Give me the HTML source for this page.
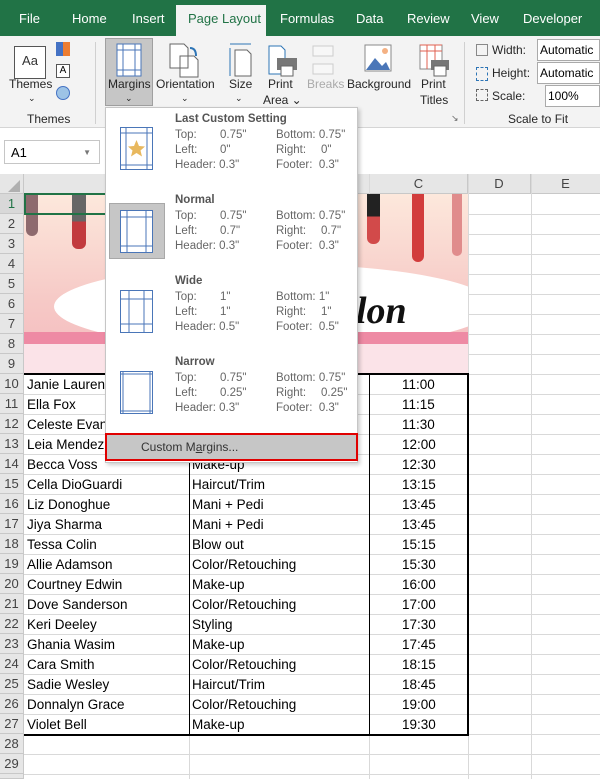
<!DOCTYPE html>
<html><head><meta charset="utf-8"><style>
*{margin:0;padding:0;box-sizing:border-box}
html,body{width:600px;height:779px;overflow:hidden}
body{background:#fff;font-family:"Liberation Sans",sans-serif;position:relative}
.a{position:absolute}
.tab{position:absolute;top:11px;color:#fff;font-size:13px}
.rb{position:absolute;font-size:12px;color:#262626;text-align:center}
.rh{position:absolute;left:0;width:24px;height:20px;background:#e6e6e6;border-bottom:1px solid #c8c8c8;border-right:1px solid #c8c8c8;font-size:13px;color:#444;text-align:center;line-height:20px}
.hl{position:absolute;left:24px;width:576px;height:1px;background:#d9d9d9}
.vl{position:absolute;top:174px;width:1px;height:605px;background:#d9d9d9}
.c{position:absolute;font-size:13.5px;color:#000;line-height:20px;white-space:nowrap}
.m{position:absolute;font-size:11.5px;color:#666;line-height:15px}
.mt{position:absolute;font-size:11.5px;color:#555;font-weight:bold}
</style></head><body>
<div class="a" style="left:0;top:0;width:600px;height:36px;background:#217346"></div>
<div class="a" style="left:176px;top:5px;width:90px;height:31px;background:#f3f3f3"></div>
<div class="tab" style="left:19px">File</div>
<div class="tab" style="left:72px">Home</div>
<div class="tab" style="left:132px">Insert</div>
<div class="tab" style="left:188px;color:#217346">Page Layout</div>
<div class="tab" style="left:280px">Formulas</div>
<div class="tab" style="left:356px">Data</div>
<div class="tab" style="left:407px">Review</div>
<div class="tab" style="left:471px">View</div>
<div class="tab" style="left:523px">Developer</div>
<div class="a" style="left:0;top:36px;width:600px;height:92px;background:#f3f3f3;border-bottom:1px solid #d5d5d5"></div>
<div class="a" style="left:14px;top:46px;width:32px;height:33px;border:1px solid #555;background:#fff;font-size:13px;text-align:center;line-height:28px;color:#333">Aa</div>
<div class="a" style="left:56px;top:42px;width:14px;height:14px;background:linear-gradient(90deg,#4472c4 50%,#ed7d31 50%)"></div>
<div class="a" style="left:56px;top:64px;width:14px;height:14px;border:1px solid #555;font-size:10px;text-align:center;background:#fff">A</div>
<div class="a" style="left:56px;top:86px;width:14px;height:14px;border-radius:50%;background:#9dc3e6;border:1px solid #4472c4"></div>
<div class="rb" style="left:9px;top:77px">Themes</div>
<div class="rb" style="left:28px;top:93px;font-size:9px">⌄</div>
<div class="rb" style="left:27px;top:112px">Themes</div>
<div class="a" style="left:95px;top:42px;width:1px;height:82px;background:#d0d0d0"></div>
<div class="a" style="left:105px;top:38px;width:48px;height:68px;background:#c6c6c6;border:1px solid #a0a0a0"></div>
<svg class="a" style="left:116px;top:43px" width="26" height="34"><rect x="1" y="1" width="24" height="32" fill="#fff" stroke="#4a76b8"/><path d="M7 1V33M19 1V33M1 7H25M1 27H25" stroke="#4a76b8"/></svg>
<div class="rb" style="left:108px;top:77px">Margins</div>
<div class="rb" style="left:125px;top:93px;font-size:9px">⌄</div>
<svg class="a" style="left:168px;top:42px" width="32" height="36"><path d="M2 2H16L20 6V26H2Z M12 14H26L30 18V35H12Z" fill="#fff" stroke="#666"/><path d="M22 6q6 0 6 8" fill="none" stroke="#2e75b6" stroke-width="2"/></svg>
<div class="rb" style="left:156px;top:77px">Orientation</div>
<div class="rb" style="left:181px;top:93px;font-size:9px">⌄</div>
<svg class="a" style="left:227px;top:42px" width="26" height="36"><path d="M3 2H24M3 6V34" stroke="#2e75b6"/><path d="M8 8H20L24 12V34H8Z" fill="#fff" stroke="#666"/></svg>
<div class="rb" style="left:229px;top:77px">Size</div>
<div class="rb" style="left:235px;top:93px;font-size:9px">⌄</div>
<svg class="a" style="left:265px;top:44px" width="34" height="34"><path d="M4 2H16L20 6V30H4Z" fill="#fff" stroke="#2e75b6"/><rect x="12" y="14" width="20" height="12" fill="#777"/><rect x="16" y="22" width="12" height="10" fill="#fff" stroke="#666"/></svg>
<div class="rb" style="left:268px;top:77px">Print</div>
<div class="rb" style="left:263px;top:93px">Area ⌄</div>
<svg class="a" style="left:307px;top:44px" width="28" height="32"><path d="M6 2H26V12H6ZM6 20H26V30H6Z" fill="#f7f7f7" stroke="#ccc"/></svg>
<div class="rb" style="left:307px;top:77px;color:#aaa">Breaks</div>
<svg class="a" style="left:364px;top:44px" width="28" height="28"><rect x="1" y="1" width="26" height="26" fill="#fff" stroke="#888"/><path d="M2 26L11 14L18 22L22 18L26 26Z" fill="#4a76b8"/><circle cx="21" cy="7" r="3" fill="#f4b183"/></svg>
<div class="rb" style="left:347px;top:77px">Background</div>
<svg class="a" style="left:419px;top:44px" width="32" height="34"><rect x="1" y="1" width="22" height="24" fill="#fff" stroke="#888"/><path d="M1 1H23M1 7H23M8 1V25M16 1V25" stroke="#e06050"/><rect x="12" y="16" width="18" height="10" fill="#777"/><rect x="15" y="22" width="12" height="10" fill="#fff" stroke="#666"/></svg>
<div class="rb" style="left:421px;top:77px">Print</div>
<div class="rb" style="left:420px;top:93px">Titles</div>
<div class="a" style="left:451px;top:113px;font-size:9px;color:#666">↘</div>
<div class="a" style="left:464px;top:42px;width:1px;height:82px;background:#d0d0d0"></div>
<div class="rb" style="left:492px;top:43px">Width:</div>
<div class="rb" style="left:492px;top:66px">Height:</div>
<div class="rb" style="left:492px;top:89px">Scale:</div>
<div class="a" style="left:476px;top:44px;width:12px;height:12px;border:1px solid #888"></div>
<div class="a" style="left:476px;top:67px;width:12px;height:14px;border:1px dashed #2e75b6"></div>
<div class="a" style="left:476px;top:89px;width:12px;height:12px;border:1px dashed #666"></div>
<div class="a" style="left:537px;top:39px;width:63px;height:22px;border:1px solid #aaa;background:#fff;font-size:12px;padding:3px 2px">Automatic</div>
<div class="a" style="left:537px;top:62px;width:63px;height:22px;border:1px solid #aaa;background:#fff;font-size:12px;padding:3px 2px">Automatic</div>
<div class="a" style="left:545px;top:85px;width:55px;height:22px;border:1px solid #aaa;background:#fff;font-size:12px;padding:3px 2px">100%</div>
<div class="rb" style="left:508px;top:112px">Scale to Fit</div>
<div class="a" style="left:0;top:129px;width:600px;height:45px;background:#fff"></div>
<div class="a" style="left:4px;top:140px;width:96px;height:24px;border:1px solid #c6c6c6;font-size:13px;padding:4px 6px">A1<span style="position:absolute;right:8px;font-size:8px;color:#777;top:7px">▼</span></div>
<div class="a" style="left:0;top:174px;width:600px;height:20px;background:#e6e6e6;border-bottom:1px solid #c8c8c8"></div>
<div class="a" style="left:0;top:174px;width:24px;height:20px;border-right:1px solid #c8c8c8"></div>
<svg class="a" style="left:6px;top:180px" width="14" height="12"><path d="M14 0V12H2Z" fill="#b0b0b0"/></svg>
<div class="a" style="left:369px;top:174px;width:99px;height:20px;border-left:1px solid #c8c8c8;border-right:1px solid #c8c8c8;text-align:center;font-size:13px;line-height:20px;color:#444">C</div>
<div class="a" style="left:468px;top:174px;width:63px;height:20px;border-right:1px solid #c8c8c8;text-align:center;font-size:13px;line-height:20px;color:#444">D</div>
<div class="a" style="left:531px;top:174px;width:69px;height:20px;text-align:center;font-size:13px;line-height:20px;color:#444">E</div>
<div class="vl" style="left:189px"></div><div class="vl" style="left:369px"></div><div class="vl" style="left:468px"></div><div class="vl" style="left:531px"></div>
<div class="hl" style="top:214px"></div><div class="hl" style="top:234px"></div><div class="hl" style="top:254px"></div><div class="hl" style="top:274px"></div><div class="hl" style="top:294px"></div><div class="hl" style="top:314px"></div><div class="hl" style="top:334px"></div><div class="hl" style="top:354px"></div><div class="hl" style="top:374px"></div><div class="hl" style="top:394px"></div><div class="hl" style="top:414px"></div><div class="hl" style="top:434px"></div><div class="hl" style="top:454px"></div><div class="hl" style="top:474px"></div><div class="hl" style="top:494px"></div><div class="hl" style="top:514px"></div><div class="hl" style="top:534px"></div><div class="hl" style="top:554px"></div><div class="hl" style="top:574px"></div><div class="hl" style="top:594px"></div><div class="hl" style="top:614px"></div><div class="hl" style="top:634px"></div><div class="hl" style="top:654px"></div><div class="hl" style="top:674px"></div><div class="hl" style="top:694px"></div><div class="hl" style="top:714px"></div><div class="hl" style="top:734px"></div><div class="hl" style="top:754px"></div><div class="hl" style="top:774px"></div>
<div class="rh" style="top:194px;background:#d8d8d8;color:#217346">1</div><div class="rh" style="top:214px">2</div><div class="rh" style="top:234px">3</div><div class="rh" style="top:254px">4</div><div class="rh" style="top:274px">5</div><div class="rh" style="top:294px">6</div><div class="rh" style="top:314px">7</div><div class="rh" style="top:334px">8</div><div class="rh" style="top:354px">9</div><div class="rh" style="top:374px">10</div><div class="rh" style="top:394px">11</div><div class="rh" style="top:414px">12</div><div class="rh" style="top:434px">13</div><div class="rh" style="top:454px">14</div><div class="rh" style="top:474px">15</div><div class="rh" style="top:494px">16</div><div class="rh" style="top:514px">17</div><div class="rh" style="top:534px">18</div><div class="rh" style="top:554px">19</div><div class="rh" style="top:574px">20</div><div class="rh" style="top:594px">21</div><div class="rh" style="top:614px">22</div><div class="rh" style="top:634px">23</div><div class="rh" style="top:654px">24</div><div class="rh" style="top:674px">25</div><div class="rh" style="top:694px">26</div><div class="rh" style="top:714px">27</div><div class="rh" style="top:734px">28</div><div class="rh" style="top:754px">29</div><div class="rh" style="top:774px;height:5px"></div>
<div class="a" style="left:24px;top:194px;width:444px;height:179px;background:linear-gradient(180deg,#fde8dc 0%,#f6c9c6 60%,#f4b9be 100%);overflow:hidden">
 <div class="a" style="left:30px;top:70px;width:440px;height:85px;border-radius:50%;background:#fff"></div>
 <div class="a" style="left:0;top:138px;width:444px;height:12px;background:#ee8aa4"></div>
 <div class="a" style="left:0;top:150px;width:444px;height:29px;background:#fbe3e8"></div>
 <div class="a" style="left:2px;top:0;width:12px;height:42px;background:#8e6a6e;border-radius:0 0 6px 6px"></div>
 <div class="a" style="left:48px;top:0;width:14px;height:55px;background:linear-gradient(180deg,#666 50%,#c23a3e 50%);border-radius:0 0 6px 6px"></div>
 <div class="a" style="left:343px;top:0;width:13px;height:50px;background:linear-gradient(180deg,#222 45%,#d24a4a 45%);border-radius:0 0 6px 6px"></div>
 <div class="a" style="left:388px;top:0;width:12px;height:68px;background:#d23c3c;border-radius:0 0 6px 6px"></div>
 <div class="a" style="left:428px;top:0;width:10px;height:62px;background:#e08c8c;border-radius:0 0 5px 5px"></div>
 <div class="a" style="left:332px;top:95px;font-family:'Liberation Serif',serif;font-style:italic;font-weight:bold;font-size:38px;color:#111">lon</div>
</div>
<div class="a" style="left:24px;top:193px;width:166px;height:22px;border:2px solid #217346"></div>
<div class="a" style="left:24px;top:373px;width:445px;height:363px;border:2px solid #000;border-left:none"></div>
<div class="a" style="left:189px;top:374px;width:1px;height:361px;background:#000"></div>
<div class="a" style="left:369px;top:374px;width:1px;height:361px;background:#000"></div>
<div class="c" style="left:27px;top:375px">Janie Laurence</div>
<div class="c" style="left:27px;top:395px">Ella Fox</div>
<div class="c" style="left:27px;top:415px">Celeste Evans</div>
<div class="c" style="left:27px;top:435px">Leia Mendez</div>
<div class="c" style="left:27px;top:455px">Becca Voss</div><div class="c" style="left:192px;top:455px">Make-up</div>
<div class="c" style="left:27px;top:475px">Cella DioGuardi</div><div class="c" style="left:192px;top:475px">Haircut/Trim</div>
<div class="c" style="left:27px;top:495px">Liz Donoghue</div><div class="c" style="left:192px;top:495px">Mani + Pedi</div>
<div class="c" style="left:27px;top:515px">Jiya Sharma</div><div class="c" style="left:192px;top:515px">Mani + Pedi</div>
<div class="c" style="left:27px;top:535px">Tessa Colin</div><div class="c" style="left:192px;top:535px">Blow out</div>
<div class="c" style="left:27px;top:555px">Allie Adamson</div><div class="c" style="left:192px;top:555px">Color/Retouching</div>
<div class="c" style="left:27px;top:575px">Courtney Edwin</div><div class="c" style="left:192px;top:575px">Make-up</div>
<div class="c" style="left:27px;top:595px">Dove Sanderson</div><div class="c" style="left:192px;top:595px">Color/Retouching</div>
<div class="c" style="left:27px;top:615px">Keri Deeley</div><div class="c" style="left:192px;top:615px">Styling</div>
<div class="c" style="left:27px;top:635px">Ghania Wasim</div><div class="c" style="left:192px;top:635px">Make-up</div>
<div class="c" style="left:27px;top:655px">Cara Smith</div><div class="c" style="left:192px;top:655px">Color/Retouching</div>
<div class="c" style="left:27px;top:675px">Sadie Wesley</div><div class="c" style="left:192px;top:675px">Haircut/Trim</div>
<div class="c" style="left:27px;top:695px">Donnalyn Grace</div><div class="c" style="left:192px;top:695px">Color/Retouching</div>
<div class="c" style="left:27px;top:715px">Violet Bell</div><div class="c" style="left:192px;top:715px">Make-up</div>
<div class="c" style="left:402px;top:375px">11:00</div><div class="c" style="left:402px;top:395px">11:15</div><div class="c" style="left:402px;top:415px">11:30</div><div class="c" style="left:402px;top:435px">12:00</div><div class="c" style="left:402px;top:455px">12:30</div><div class="c" style="left:402px;top:475px">13:15</div><div class="c" style="left:402px;top:495px">13:45</div><div class="c" style="left:402px;top:515px">13:45</div><div class="c" style="left:402px;top:535px">15:15</div><div class="c" style="left:402px;top:555px">15:30</div><div class="c" style="left:402px;top:575px">16:00</div><div class="c" style="left:402px;top:595px">17:00</div><div class="c" style="left:402px;top:615px">17:30</div><div class="c" style="left:402px;top:635px">17:45</div><div class="c" style="left:402px;top:655px">18:15</div><div class="c" style="left:402px;top:675px">18:45</div><div class="c" style="left:402px;top:695px">19:00</div><div class="c" style="left:402px;top:715px">19:30</div>
<div class="a" style="left:105px;top:107px;width:253px;height:356px;background:#fff;border:1px solid #c6c6c6;box-shadow:2px 2px 4px rgba(0,0,0,.2)"></div>
<svg class="a" style="left:120px;top:127px" width="34" height="44"><rect x=".5" y=".5" width="32" height="42" fill="#fff" stroke="#4a76b8"/><path d="M.5 6H33M.5 38H33M6 .5V43M27 .5V43" stroke="#4a76b8"/><path d="M16.5 13l2.5 6 6 .5-4.5 4 1.5 6-5.5-3.5-5.5 3.5 1.5-6-4.5-4 6-.5z" fill="#e8b85e"/></svg>
<div class="a" style="left:109px;top:203px;width:56px;height:56px;background:#c6c6c6;border:1px solid #a8a8a8"></div>
<svg class="a" style="left:120px;top:210px" width="34" height="44"><rect x=".5" y=".5" width="32" height="42" fill="#fff" stroke="#4a76b8"/><path d="M.5 7H33M.5 36H33M7 .5V43M26 .5V43" stroke="#4a76b8"/></svg>
<svg class="a" style="left:120px;top:290px" width="34" height="44"><rect x=".5" y=".5" width="32" height="42" fill="#fff" stroke="#4a76b8"/><path d="M.5 9H33M.5 34H33M9 .5V43M24 .5V43" stroke="#4a76b8"/></svg>
<svg class="a" style="left:120px;top:371px" width="34" height="44"><rect x=".5" y=".5" width="32" height="42" fill="#fff" stroke="#4a76b8"/><path d="M.5 3H33M.5 40H33M3 .5V43M30 .5V43" stroke="#4a76b8"/></svg>
<div class="mt" style="left:175px;top:113px">Last Custom Setting</div>
<div class="m" style="left:175px;top:128px">Top:<br>Left:<br>Header: 0.3"</div><div class="m" style="left:220px;top:128px">0.75"<br>0"</div>
<div class="m" style="left:276px;top:128px">Bottom: 0.75"<br>Right:<br>Footer:&nbsp; 0.3"</div><div class="m" style="left:321px;top:143px">0"</div>
<div class="mt" style="left:175px;top:194px">Normal</div>
<div class="m" style="left:175px;top:209px">Top:<br>Left:<br>Header: 0.3"</div><div class="m" style="left:220px;top:209px">0.75"<br>0.7"</div>
<div class="m" style="left:276px;top:209px">Bottom: 0.75"<br>Right:<br>Footer:&nbsp; 0.3"</div><div class="m" style="left:321px;top:224px">0.7"</div>
<div class="mt" style="left:175px;top:275px">Wide</div>
<div class="m" style="left:175px;top:290px">Top:<br>Left:<br>Header: 0.5"</div><div class="m" style="left:220px;top:290px">1"<br>1"</div>
<div class="m" style="left:276px;top:290px">Bottom: 1"<br>Right:<br>Footer:&nbsp; 0.5"</div><div class="m" style="left:321px;top:305px">1"</div>
<div class="mt" style="left:175px;top:356px">Narrow</div>
<div class="m" style="left:175px;top:371px">Top:<br>Left:<br>Header: 0.3"</div><div class="m" style="left:220px;top:371px">0.75"<br>0.25"</div>
<div class="m" style="left:276px;top:371px">Bottom: 0.75"<br>Right:<br>Footer:&nbsp; 0.3"</div><div class="m" style="left:321px;top:386px">0.25"</div>
<div class="a" style="left:105px;top:433px;width:253px;height:28px;background:#c6c6c6;border:2px solid #e00000;font-size:12px;color:#333;padding:5px 0 0 34px">Custom M<u>a</u>rgins...</div>
</body></html>
